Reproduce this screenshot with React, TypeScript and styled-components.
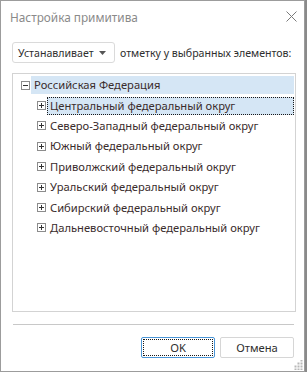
import React from "react";
import styled, { createGlobalStyle } from "styled-components";

const GlobalStyle = createGlobalStyle`
  html, body {
    margin: 0;
    padding: 0;
    background: #8a8a8a;
  }
  body {
    font-family: "Noto Sans", "Open Sans", sans-serif;
    font-size: 11.2px;
    color: #333333;
  }
`;

const districts = [
  "Центральный федеральный округ",
  "Северо-Западный федеральный округ",
  "Южный федеральный округ",
  "Приволжский федеральный округ",
  "Уральский федеральный округ",
  "Сибирский федеральный округ",
  "Дальневосточный федеральный округ",
];

const Toggle = ({ open }: { open?: boolean }) => (
  <ToggleBox>
    <svg width="9" height="9" viewBox="0 0 9 9">
      <rect x="0.5" y="0.5" width="8" height="8" fill="#fff" stroke="#8c8c8c" />
      <line x1="2" y1="4.5" x2="7" y2="4.5" stroke="#333" />
      {!open && <line x1="4.5" y1="2" x2="4.5" y2="7" stroke="#333" />}
    </svg>
  </ToggleBox>
);

export default function App() {
  return (
    <>
      <GlobalStyle />
      <Window>
        <TitleBar>
          <Title>Настройка примитива</Title>
          <CloseButton>
            <svg width="11" height="11" viewBox="0 0 11 11">
              <path d="M0.5 0.5 L10.5 10.5 M10.5 0.5 L0.5 10.5" stroke="#7a7a7a" strokeWidth="1" />
            </svg>
          </CloseButton>
        </TitleBar>
        <Content>
          <ModeRow>
            <Dropdown>
              <span>Устанавливает</span>
              <svg width="7" height="4" viewBox="0 0 7 4">
                <path d="M0 0 H7 L3.5 4 Z" fill="#555" />
              </svg>
            </Dropdown>
            <ModeLabel>отметку у выбранных элементов:</ModeLabel>
          </ModeRow>
          <TreeBox>
            <Row $level={0}>
              <Toggle open />
              <Label $selected>Российская Федерация</Label>
            </Row>
            {districts.map((d, i) => (
              <Row key={d} $level={1}>
                <Toggle />
                <Label $selected={i === 0} $focused={i === 0}>
                  {d}
                </Label>
              </Row>
            ))}
          </TreeBox>
          <Separator />
          <ButtonRow>
            <Button $primary>
              <span>OK</span>
            </Button>
            <Button>
              <span>Отмена</span>
            </Button>
          </ButtonRow>
        </Content>
        <Grip>
          <svg width="10" height="10" viewBox="0 0 10 10">
            {[
              [8, 0], [8, 3], [5, 3], [8, 6], [5, 6], [2, 6], [8, 9], [5, 9], [2, 9],
            ].map(([x, y], k) => (
              <rect key={k} x={x - 0.5} y={y - 0.5} width="2" height="2" fill="#b8b8b8" />
            ))}
          </svg>
        </Grip>
      </Window>
    </>
  );
}

const Window = styled.div`
  position: relative;
  box-sizing: border-box;
  width: 305px;
  height: 372px;
  background: #ffffff;
  border: 1px solid #9c9c9c;
  display: flex;
  flex-direction: column;
`;

const TitleBar = styled.div`
  height: 31px;
  display: flex;
  align-items: center;
  justify-content: space-between;
  padding: 0 6px 0 9px;
`;

const Title = styled.div`
  font-size: 11.8px;
  color: #8a8a8a;
  margin-top: 1px;
`;

const CloseButton = styled.div`
  width: 11px;
  height: 11px;
  display: flex;
  margin-right: 1px;
`;

const Content = styled.div`
  display: flex;
  flex-direction: column;
  padding: 0 8px 0 11px;
`;

const ModeRow = styled.div`
  display: flex;
  align-items: center;
  gap: 5px;
  margin-top: 10px;
  white-space: nowrap;
  font-size: 10.6px;
`;

const Dropdown = styled.div`
  box-sizing: border-box;
  flex-shrink: 0;
  width: 103px;
  height: 21px;
  border: 1px solid #dadada;
  border-radius: 3px;
  display: flex;
  align-items: center;
  justify-content: space-between;
  padding: 0 8px 0 5px;
  color: #2e2e2e;
`;

const ModeLabel = styled.span`
  color: #2e2e2e;
`;

const TreeBox = styled.div`
  box-sizing: border-box;
  height: 239px;
  margin-top: 10px;
  border: 1px solid #d3d3d3;
  padding: 1px 1px 0 0;
`;

const Row = styled.div<{ $level: number }>`
  height: 20.4px;
  display: flex;
  align-items: center;
  padding-left: ${(p) => 8 + p.$level * 16}px;
`;

const ToggleBox = styled.div`
  width: 9px;
  height: 9px;
  display: flex;
  margin-right: 1px;
`;

const Label = styled.div<{ $selected?: boolean; $focused?: boolean }>`
  flex: 1;
  box-sizing: border-box;
  height: 18px;
  line-height: 16px;
  padding: 0 2px;
  white-space: nowrap;
  color: #3a2c2c;
  background: ${(p) => (p.$selected ? "#d5e6f5" : "transparent")};
  border: 1px ${(p) => (p.$focused ? "dotted #1a1a1a" : "solid transparent")};
`;

const Separator = styled.div`
  height: 1px;
  background: #c8c8c8;
  margin: 12px 0 0 1px;
  width: 281px;
`;

const ButtonRow = styled.div`
  display: flex;
  justify-content: flex-end;
  gap: 5px;
  margin-top: 12px;
  padding-right: 2px;
`;

const Button = styled.div<{ $primary?: boolean }>`
  box-sizing: border-box;
  width: 74px;
  height: 21px;
  border: 1px solid ${(p) => (p.$primary ? "#4a95d6" : "#d6d6d6")};
  border-radius: 2px;
  padding: 1px;
  display: flex;
  color: #2e2e2e;

  span {
    flex: 1;
    display: flex;
    align-items: center;
    justify-content: center;
    border: 1px ${(p) => (p.$primary ? "dotted #1a1a1a" : "solid transparent")};
  }
`;

const Grip = styled.div`
  position: absolute;
  right: 1px;
  bottom: 1px;
  width: 10px;
  height: 10px;
  display: flex;
`;
